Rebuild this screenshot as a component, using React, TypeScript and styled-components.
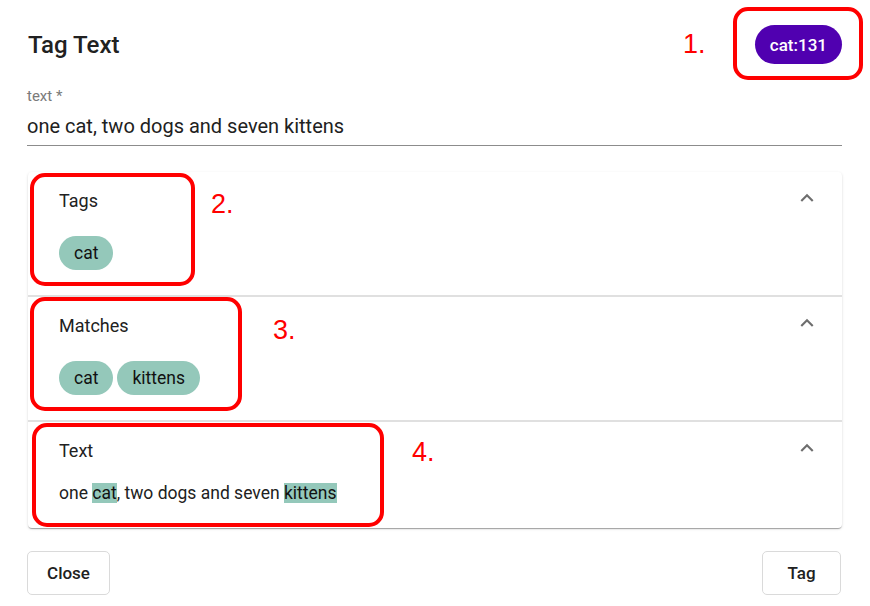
import React from 'react';
import styled, { createGlobalStyle } from 'styled-components';

const GlobalStyle = createGlobalStyle`
  html, body {
    margin: 0;
    padding: 0;
    background: #fff;
  }
  body {
    font-family: Roboto, "Noto Sans", sans-serif;
    color: #212121;
  }
`;

const Page = styled.div`
  position: relative;
  width: 870px;
  height: 606px;
  box-sizing: border-box;
  padding: 25px 28px 0 27px;
  overflow: hidden;
`;

const Header = styled.div`
  display: flex;
  align-items: center;
  justify-content: space-between;
  height: 39px;
  padding-left: 1px;
`;

const Title = styled.h2`
  margin: 0;
  font-size: 24px;
  font-weight: 500;
  line-height: 32px;
  color: #212121;
`;

const CountChip = styled.span`
  display: inline-flex;
  align-items: center;
  height: 39px;
  padding: 0 15px;
  border-radius: 20px;
  background: #5000b0;
  color: #fff;
  font-size: 17px;
  font-weight: 500;
`;

const Field = styled.div`
  margin-top: 23px;
`;

const FieldLabel = styled.label`
  display: block;
  font-size: 15px;
  line-height: 19px;
  color: #7a7a7a;
`;

const FieldInput = styled.input`
  display: block;
  width: 100%;
  box-sizing: border-box;
  border: none;
  border-bottom: 1px solid #8c8c8c;
  padding: 6px 0 5px;
  font-family: Roboto, sans-serif;
  font-size: 20px;
  line-height: 28px;
  height: 40px;
  color: #212121;
  outline: none;
  background: transparent;
`;

const Card = styled.div`
  margin-top: 26px;
  margin-left: 1px;
  border-radius: 4px;
  background: #fff;
  box-shadow: 0 2px 1px -1px rgba(0, 0, 0, 0.2), 0 1px 1px 0 rgba(0, 0, 0, 0.14),
    0 1px 3px 0 rgba(0, 0, 0, 0.12);
`;

const Section = styled.section<{ $first?: boolean; $bottom: number }>`
  padding: 17px 22px ${(p) => p.$bottom}px 31px;
  border-top: ${(p) => (p.$first ? 'none' : '2px solid #e0e0e0')};
`;

const SectionHead = styled.div`
  display: flex;
  justify-content: space-between;
  align-items: flex-start;
  height: 24px;
`;

const SectionTitle = styled.span`
  font-size: 18px;
  line-height: 24px;
  color: #212121;
`;

const Chevron = styled.svg`
  width: 26px;
  height: 26px;
  margin-top: -4px;
  fill: #6e6e6e;
`;

const ChipRow = styled.div`
  display: flex;
  gap: 4px;
  margin-top: 23px;
`;

const Chip = styled.span`
  display: inline-flex;
  align-items: center;
  height: 34px;
  padding: 0 15px;
  border-radius: 17px;
  background: #94c8ba;
  color: #111;
  font-size: 17.5px;
`;

const Paragraph = styled.p`
  margin: 18px 0 0;
  font-size: 17.5px;
  line-height: 24px;
  color: #212121;
`;

const Mark = styled.span`
  background: #94c8ba;
  color: #111;
`;

const Actions = styled.div`
  display: flex;
  justify-content: space-between;
  margin-top: 23px;
  padding-right: 1px;
`;

const Button = styled.button<{ $w: number }>`
  width: ${(p) => p.$w}px;
  height: 44px;
  border: 1px solid #dadada;
  border-radius: 5px;
  background: #fff;
  font-family: Roboto, sans-serif;
  font-size: 17px;
  font-weight: 500;
  color: #212121;
  cursor: pointer;
`;

// red callouts drawn over the screenshot
const Callout = styled.div<{ $x: number; $y: number; $w: number; $h: number }>`
  position: absolute;
  left: ${(p) => p.$x}px;
  top: ${(p) => p.$y}px;
  width: ${(p) => p.$w}px;
  height: ${(p) => p.$h}px;
  box-sizing: border-box;
  border: 4px solid #ff0000;
  border-radius: 15px;
  pointer-events: none;
`;

const CalloutNum = styled.span<{ $x: number; $y: number }>`
  position: absolute;
  left: ${(p) => p.$x}px;
  top: ${(p) => p.$y}px;
  font-family: "Liberation Sans", Arial, sans-serif;
  font-size: 27px;
  line-height: 30px;
  color: #ff0000;
`;

const ExpandLess = () => (
  <Chevron viewBox="0 0 24 24">
    <path d="M12 8l-6 6 1.41 1.41L12 10.83l4.59 4.58L18 14z" />
  </Chevron>
);

const App = () => {
  return (
    <>
      <GlobalStyle />
      <Page>
        <Header>
          <Title>Tag Text</Title>
          <CountChip>cat:131</CountChip>
        </Header>
        <Field>
          <FieldLabel>text *</FieldLabel>
          <FieldInput defaultValue="one cat, two dogs and seven kittens" />
        </Field>
        <Card>
          <Section $first $bottom={25}>
            <SectionHead>
              <SectionTitle>Tags</SectionTitle>
              <ExpandLess />
            </SectionHead>
            <ChipRow>
              <Chip>cat</Chip>
            </ChipRow>
          </Section>
          <Section $bottom={25}>
            <SectionHead>
              <SectionTitle>Matches</SectionTitle>
              <ExpandLess />
            </SectionHead>
            <ChipRow>
              <Chip>cat</Chip>
              <Chip>kittens</Chip>
            </ChipRow>
          </Section>
          <Section $bottom={23}>
            <SectionHead>
              <SectionTitle>Text</SectionTitle>
              <ExpandLess />
            </SectionHead>
            <Paragraph>
              one <Mark>cat</Mark>, two dogs and seven <Mark>kittens</Mark>
            </Paragraph>
          </Section>
        </Card>
        <Actions>
          <Button $w={83}>Close</Button>
          <Button $w={79}>Tag</Button>
        </Actions>

        <Callout $x={733} $y={7} $w={130} $h={73} />
        <CalloutNum $x={683} $y={29}>1.</CalloutNum>
        <Callout $x={30} $y={173} $w={165} $h={113} />
        <CalloutNum $x={211} $y={189}>2.</CalloutNum>
        <Callout $x={30} $y={297} $w={212} $h={114} />
        <CalloutNum $x={273} $y={315}>3.</CalloutNum>
        <Callout $x={32} $y={423} $w={352} $h={104} />
        <CalloutNum $x={412} $y={437}>4.</CalloutNum>
      </Page>
    </>
  );
};

export default App;
